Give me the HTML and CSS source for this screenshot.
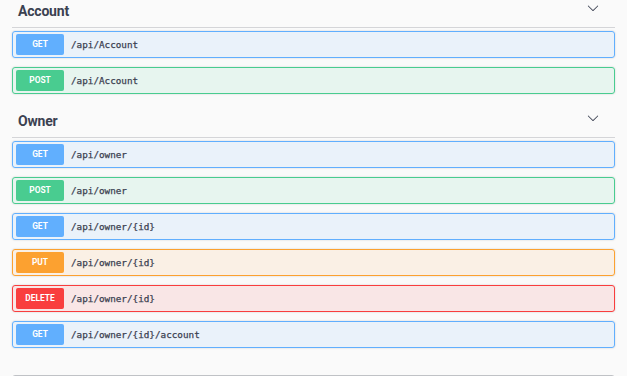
FILE: index.html
```html
<!DOCTYPE html>
<html lang="en">
<head>
    <meta charset="UTF-8">
    <meta name="viewport" content="width=device-width, initial-scale=1.0">
    <title>API Operations</title>
    <link rel="stylesheet" href="styles.css">
</head>
<body>
<div class="wrapper">

    <div class="tag-section">
        <h3 class="tag">
            <span>Account</span>
            <svg class="arrow" width="12" height="12" viewBox="0 0 20 20"><path d="M17.418 6.109c.272-.268.709-.268.979 0s.271.701 0 .969l-7.908 7.83c-.27.268-.707.268-.979 0l-7.908-7.83c-.27-.268-.27-.701 0-.969.271-.268.709-.268.979 0L10 13.25l7.418-7.141z"/></svg>
        </h3>
        <div class="opblock get"><span class="method">GET</span><span class="path">/api/Account</span></div>
        <div class="opblock post"><span class="method">POST</span><span class="path">/api/Account</span></div>
    </div>

    <div class="tag-section">
        <h3 class="tag">
            <span>Owner</span>
            <svg class="arrow" width="12" height="12" viewBox="0 0 20 20"><path d="M17.418 6.109c.272-.268.709-.268.979 0s.271.701 0 .969l-7.908 7.83c-.27.268-.707.268-.979 0l-7.908-7.83c-.27-.268-.27-.701 0-.969.271-.268.709-.268.979 0L10 13.25l7.418-7.141z"/></svg>
        </h3>
        <div class="opblock get"><span class="method">GET</span><span class="path">/api/owner</span></div>
        <div class="opblock post"><span class="method">POST</span><span class="path">/api/owner</span></div>
        <div class="opblock get"><span class="method">GET</span><span class="path">/api/owner/{id}</span></div>
        <div class="opblock put"><span class="method">PUT</span><span class="path">/api/owner/{id}</span></div>
        <div class="opblock delete"><span class="method">DELETE</span><span class="path">/api/owner/{id}</span></div>
        <div class="opblock get"><span class="method">GET</span><span class="path">/api/owner/{id}/account</span></div>
    </div>

    <div class="models"></div>

</div>
</body>
</html>
```

FILE: styles.css
```css
body {
    margin: 0;
    padding: 0;
    background: #fafafa;
    font-family: Roboto, sans-serif;
    color: #3b4151;
    overflow: hidden;
}

.wrapper {
    padding: 0 12px;
}

.tag-section {
    padding-bottom: 7px;
}

.tag {
    display: flex;
    justify-content: space-between;
    align-items: flex-start;
    margin: 0 0 3px;
    padding: 0 16px 4px 6px;
    height: 23px;
    line-height: 23px;
    font-size: 14px;
    font-weight: 700;
    letter-spacing: -0.2px;
    border-bottom: 1px solid rgba(59, 65, 81, 0.2);
}

.arrow {
    margin-top: 2px;
    fill: #3b4151;
}

.opblock {
    display: flex;
    align-items: center;
    height: 21px;
    padding: 2px 3px;
    margin-bottom: 9px;
    border: 1px solid;
    border-radius: 3px;
    box-shadow: 0 0 2px rgba(0, 0, 0, 0.19);
}

.method {
    width: 48px;
    height: 21px;
    line-height: 21px;
    text-align: center;
    border-radius: 2px;
    color: #fff;
    font-size: 8.4px;
    font-weight: 700;
}

.path {
    padding-left: 7px;
    font-family: "DejaVu Sans Mono", monospace;
    font-size: 9.3px;
    -webkit-text-stroke: 0.25px #3b4151;
    color: #3b4151;
}

.get { background: rgba(97, 175, 254, 0.1); border-color: #61affe; }
.get .method { background: #61affe; }

.post { background: rgba(73, 204, 144, 0.1); border-color: #49cc90; }
.post .method { background: #49cc90; }

.put { background: rgba(252, 161, 48, 0.1); border-color: #fca130; }
.put .method { background: #fca130; }

.delete { background: rgba(249, 62, 62, 0.1); border-color: #f93e3e; }
.delete .method { background: #f93e3e; }

.models {
    margin-top: 11px;
    height: 20px;
    border: 1px solid rgba(59, 65, 81, 0.3);
    border-radius: 3px;
}
```
